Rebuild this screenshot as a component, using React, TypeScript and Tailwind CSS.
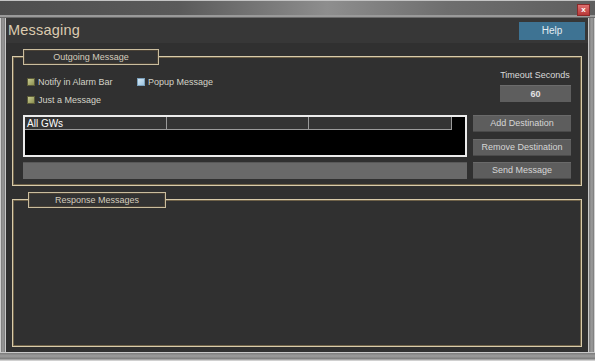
import React from "react";

const font = { fontFamily: '"Liberation Sans", Arial, sans-serif' };

function Check({ color }: { color: "olive" | "blue" }) {
  return (
    <span
      className={
        color === "olive"
          ? "inline-block w-[8px] h-[8px] border border-[#5c5c38] bg-[linear-gradient(135deg,#c8cc90,#8c9050)]"
          : "inline-block w-[8px] h-[8px] border border-[#7aa0bc] bg-[linear-gradient(135deg,#d4e8f6,#9cc4e0)]"
      }
    />
  );
}

function Btn({ children }: { children: React.ReactNode }) {
  return (
    <div className="h-[17px] w-full bg-[#5d5d5d] border-t border-[#6a6a6a] border-b border-b-[#4a4a4a] flex items-center justify-center text-[9px] text-[#d6d6d6] leading-none">
      {children}
    </div>
  );
}

export default function App() {
  return (
    <div
      className="w-[595px] h-[361px] flex flex-col bg-[#8a8a8a] overflow-hidden"
      style={font}
    >
      {/* title bar */}
      <div className="h-[18px] shrink-0 relative border-t border-[#c4c4c4] bg-[linear-gradient(90deg,#4e4e4e_0%,#5a5a5a_30%,#8e8e8e_55%,#6e6e6e_75%,#5e5e5e_100%)]">
        <div className="absolute left-0 right-0 bottom-0 h-[3px] bg-[#9a9a9a] border-b border-[#6a6a6a]" />
        <div className="absolute right-[5px] top-[3px] w-[13px] h-[12px] bg-[linear-gradient(180deg,#e07070,#b83838)] border border-[#8a2a2a] flex items-center justify-center text-[8px] leading-none text-white font-bold">
          x
        </div>
      </div>
      <div className="flex flex-1 min-h-0">
        {/* left frame */}
        <div className="w-[6px] shrink-0 bg-[linear-gradient(90deg,#d0d0d0_0px,#d0d0d0_1px,#7a7a7a_1px,#9a9a9a_3px,#7a7a7a_5px,#c8c8c8_5px)]" />
        {/* content */}
        <div className="flex-1 flex flex-col bg-[#303030]">
          <div className="h-[25px] shrink-0 bg-[#373737] flex items-center justify-between pl-[2px] pr-[3px]">
            <span className="text-[14.5px] leading-none text-[#dccbb0] tracking-[0.2px]">
              Messaging
            </span>
            <div className="w-[66px] h-[18px] bg-[#3e7393] flex items-center justify-center text-[10px] text-[#e4ecf2] leading-none">
              Help
            </div>
          </div>

          {/* Outgoing Message group */}
          <div className="relative mx-[6px] mt-[13px] h-[130px] shrink-0 border border-[#d8cbaa] shadow-[inset_0_0_0_1px_#6e6148] flex gap-[6px] pl-[10px] pr-[10px]">
            <div className="absolute left-[10px] top-[-8px] w-[136px] h-[16px] bg-[#323232] border border-[#cabd9e] shadow-[inset_0_0_0_1px_#4a4236] flex items-center justify-center text-[9px] text-[#d4ccbc] leading-none">
              Outgoing Message
            </div>
            <div className="w-[444px] flex flex-col">
              <div className="mt-[19px] h-[12px] flex items-center pl-[4px] text-[9px] text-[#d4d4c8] leading-none">
                <div className="w-[110px] flex items-center gap-[3px]">
                  <Check color="olive" />
                  <span>Notify in Alarm Bar</span>
                </div>
                <div className="flex items-center gap-[3px]">
                  <Check color="blue" />
                  <span>Popup Message</span>
                </div>
              </div>
              <div className="mt-[6px] h-[12px] flex items-center pl-[4px] gap-[3px] text-[9px] text-[#d4d4c8] leading-none">
                <Check color="olive" />
                <span>Just a Message</span>
              </div>
              <div className="mt-[9px] h-[42px] bg-black border-2 border-[#ececec] flex flex-col">
                <div className="h-[13px] w-[427px] flex bg-[#343434] border-b border-[#9a9a9a]">
                  <div className="w-[142px] border-r border-[#9a9a9a] text-[10px] leading-[13px] text-white pl-[2px]">
                    All GWs
                  </div>
                  <div className="w-[142px] border-r border-[#9a9a9a]" />
                  <div className="flex-1 border-r border-[#9a9a9a]" />
                </div>
              </div>
              <div className="mt-[5px] h-[17px] bg-[#696969] border-t border-[#585858]" />
            </div>
            <div className="w-[98px] flex flex-col items-end">
              <div className="mt-[12px] h-[12px] w-[72px] text-[9px] leading-[12px] text-[#dadada] text-center">
                Timeout Seconds
              </div>
              <div className="mt-[4px] h-[17px] w-[71px] bg-[#5e5e5e] border-t border-[#6c6c6c] flex items-center justify-center text-[9px] font-bold text-[#e2e2e2] leading-none">
                60
              </div>
              <div className="mt-[13px] w-full">
                <Btn>Add Destination</Btn>
              </div>
              <div className="mt-[7px] w-full">
                <Btn>Remove Destination</Btn>
              </div>
              <div className="mt-[6px] w-full">
                <Btn>Send Message</Btn>
              </div>
            </div>
          </div>

          {/* Response Messages group */}
          <div className="relative mx-[6px] mt-[13px] h-[148px] shrink-0 border border-[#d8cbaa] shadow-[inset_0_0_0_1px_#6e6148]">
            <div className="absolute left-[15px] top-[-8px] w-[138px] h-[16px] bg-[#323232] border border-[#cabd9e] shadow-[inset_0_0_0_1px_#4a4236] flex items-center justify-center text-[9px] text-[#d4ccbc] leading-none">
              Response Messages
            </div>
          </div>
          <div className="flex-1" />
        </div>
        {/* right frame */}
        <div className="w-[7px] shrink-0 bg-[linear-gradient(90deg,#c8c8c8_0px,#c8c8c8_1px,#7a7a7a_1px,#9c9c9c_4px,#7a7a7a_6px,#d0d0d0_6px)]" />
      </div>
      {/* bottom frame */}
      <div className="h-[9px] shrink-0 bg-[linear-gradient(180deg,#c8c8c8_0px,#c8c8c8_1px,#7a7a7a_1px,#9c9c9c_4px,#7a7a7a_7px,#d0d0d0_8px)]" />
    </div>
  );
}
